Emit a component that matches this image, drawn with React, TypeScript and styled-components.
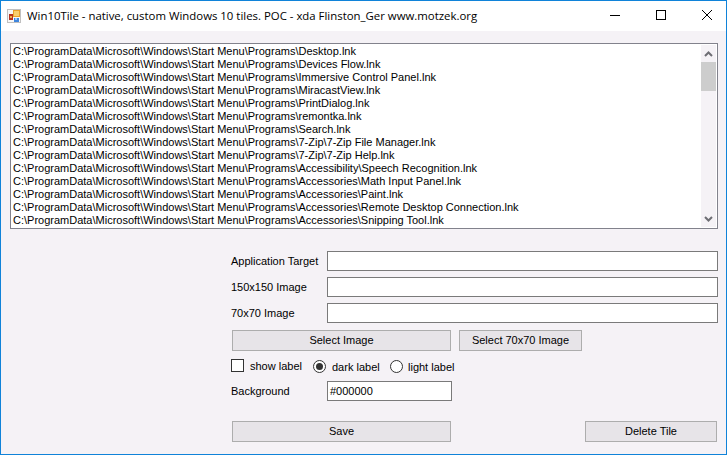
import React from "react";
import styled, { createGlobalStyle } from "styled-components";

const Global = createGlobalStyle`
  html, body { margin: 0; padding: 0; background: #f5f2f6; }
  * { box-sizing: border-box; }
`;

const Win = styled.div`
  width: 727px; height: 455px; border: 1px solid #1083d9; background: #f5f2f6;
  display: flex; flex-direction: column; overflow: hidden;
  font-family: "Liberation Sans", Arial, sans-serif; font-size: 11px; color: #000;
`;
const TitleBar = styled.div`
  height: 30px; background: #fff; display: flex; align-items: center; flex: none; padding-left: 6px; overflow: hidden;
`;
const TitleText = styled.div`
  margin-left: 6px; font-family: "Open Sans", sans-serif; font-size: 11.4px; white-space: nowrap; flex: 1;
  padding-bottom: 1px;
`;
const Captions = styled.div`
  display: flex; flex: none; margin-right: -4px; align-self: flex-start;
`;
const Caption = styled.div`
  width: 46px; height: 28px; display: flex; align-items: center; justify-content: center; flex: none;
`;
const ListBox = styled.div`
  margin: 12px 0 0 9px; width: 708px; height: 186px; border: 1px solid #82828c; background: #fff;
  display: flex; flex: none; overflow: hidden;
`;
const Items = styled.div`
  flex: 1; padding: 1px 0 0 2px; overflow: hidden;
`;
const Item = styled.div`
  height: 13px; line-height: 13px; white-space: nowrap;
`;
const Scroll = styled.div`
  width: 15px; margin: 1px 1px 1px 0; background: #f5f2f6; display: flex; flex-direction: column; flex: none;
`;
const ScrollBtn = styled.div`
  height: 17px; display: flex; align-items: center; justify-content: center; flex: none;
`;
const Thumb = styled.div`
  height: 29px; background: #cdcdcd; flex: none;
`;
const ScrollSpace = styled.div`flex: 1;`;
const Form = styled.div`
  margin: 22px 0 0 230px; width: 487px; display: flex; flex-direction: column;
`;
const Row = styled.div<{ $mb: number; $h?: number }>`
  display: flex; align-items: center; height: ${p => p.$h ?? 20}px; margin-bottom: ${p => p.$mb}px;
`;
const Label = styled.div`
  width: 96px; flex: none; white-space: nowrap;
`;
const Input = styled.div<{ $w?: number }>`
  width: ${p => p.$w ?? 391}px; height: 20px; flex: none; background: #fff; border: 1px solid #7a7a7a;
  line-height: 18px; padding-left: 2px; white-space: nowrap;
`;
const Button = styled.div<{ $w: number }>`
  width: ${p => p.$w}px; height: 21px; flex: none; background: #e7e4e8; border: 1px solid #adadad;
  display: flex; align-items: center; justify-content: center; white-space: nowrap; padding-bottom: 1px;
`;
const Check = styled.div`
  width: 13px; height: 13px; border: 1px solid #333; background: #fff; flex: none;
`;
const Radio = styled.div<{ $on?: boolean }>`
  width: 13px; height: 13px; border-radius: 50%; border: 1px solid #333; background: #fff; flex: none;
  display: flex; align-items: center; justify-content: center;
  &::after { content: ""; width: 7px; height: 7px; border-radius: 50%; background: ${p => p.$on ? "#333" : "transparent"}; }
`;
const Opt = styled.div<{ $gap: number; $w: number; $mb?: number }>`
  display: flex; align-items: center; gap: ${p => p.$gap}px; width: ${p => p.$w}px; flex: none; white-space: nowrap;
  margin-bottom: ${p => p.$mb ?? 0}px;
`;
const BtnRow = styled.div<{ $mb: number; $between?: boolean }>`
  display: flex; padding: 0 ${p => p.$between ? 1 : 0}px 0 1px; height: 21px; margin-bottom: ${p => p.$mb}px;
  justify-content: ${p => p.$between ? "space-between" : "flex-start"}; gap: ${p => p.$between ? 0 : 8}px;
`;

const P = "C:\\ProgramData\\Microsoft\\Windows\\Start Menu\\Programs\\";
const items = ["Desktop.lnk","Devices Flow.lnk","Immersive Control Panel.lnk","MiracastView.lnk","PrintDialog.lnk","remontka.lnk","Search.lnk","7-Zip\\7-Zip File Manager.lnk","7-Zip\\7-Zip Help.lnk","Accessibility\\Speech Recognition.lnk","Accessories\\Math Input Panel.lnk","Accessories\\Paint.lnk","Accessories\\Remote Desktop Connection.lnk","Accessories\\Snipping Tool.lnk"];

const AppIcon = () => (
  <svg width="14" height="14" viewBox="0 0 14 14">
    <rect x="0.5" y="0.5" width="13" height="13" fill="#f7f7f7" stroke="#c0c0c0" />
    <rect x="2" y="5" width="4" height="6" fill="#b8321f" />
    <rect x="3" y="7" width="2" height="2" fill="#e9b44c" />
    <rect x="6" y="1" width="7" height="7" fill="#e9a12a" />
    <rect x="7" y="2" width="5" height="5" fill="#f8cf6e" />
    <rect x="7" y="9" width="5" height="4" fill="#3f86de" />
    <rect x="8" y="9" width="2" height="2" fill="#9cc8f2" />
  </svg>
);

export default function App() {
  return (
    <Win>
      <Global />
      <TitleBar>
        <AppIcon />
        <TitleText>Win10Tile - native, custom Windows 10 tiles. POC - xda Flinston_Ger www.motzek.org</TitleText>
        <Captions>
          <Caption>
            <svg width="10" height="10" viewBox="0 0 10 10"><path d="M0 5.5h10" stroke="#000" /></svg>
          </Caption>
          <Caption>
            <svg width="10" height="10" viewBox="0 0 10 10"><rect x="0.5" y="0.5" width="9" height="9" fill="none" stroke="#000" /></svg>
          </Caption>
          <Caption>
            <svg width="10" height="10" viewBox="0 0 10 10"><path d="M0 0L10 10M10 0L0 10" stroke="#000" strokeWidth="1" /></svg>
          </Caption>
        </Captions>
      </TitleBar>
      <ListBox>
        <Items>{items.map(i => <Item key={i}>{P + i}</Item>)}</Items>
        <Scroll>
          <ScrollBtn>
            <svg width="9" height="6" viewBox="0 0 9 6"><path d="M1 5L4.5 1.5L8 5" fill="none" stroke="#6e6e74" strokeWidth="2" /></svg>
          </ScrollBtn>
          <Thumb />
          <ScrollSpace />
          <ScrollBtn>
            <svg width="9" height="6" viewBox="0 0 9 6"><path d="M1 1L4.5 4.5L8 1" fill="none" stroke="#6e6e74" strokeWidth="2" /></svg>
          </ScrollBtn>
        </Scroll>
      </ListBox>
      <Form>
        <Row $mb={6}><Label>Application Target</Label><Input /></Row>
        <Row $mb={6}><Label>150x150 Image</Label><Input /></Row>
        <Row $mb={7}><Label>70x70 Image</Label><Input /></Row>
        <BtnRow $mb={5}><Button $w={219}>Select Image</Button><Button $w={123}>Select 70x70 Image</Button></BtnRow>
        <Row $mb={4} $h={21}>
          <Opt $gap={6} $w={82} $mb={2}><Check />show label</Opt>
          <Opt $gap={6} $w={77}><Radio $on />dark label</Opt>
          <Opt $gap={5} $w={64}><Radio />light label</Opt>
        </Row>
        <Row $mb={20}><Label>Background</Label><Input $w={125}>#000000</Input></Row>
        <BtnRow $mb={0} $between><Button $w={219}>Save</Button><Button $w={132}>Delete Tile</Button></BtnRow>
      </Form>
    </Win>
  );
}
